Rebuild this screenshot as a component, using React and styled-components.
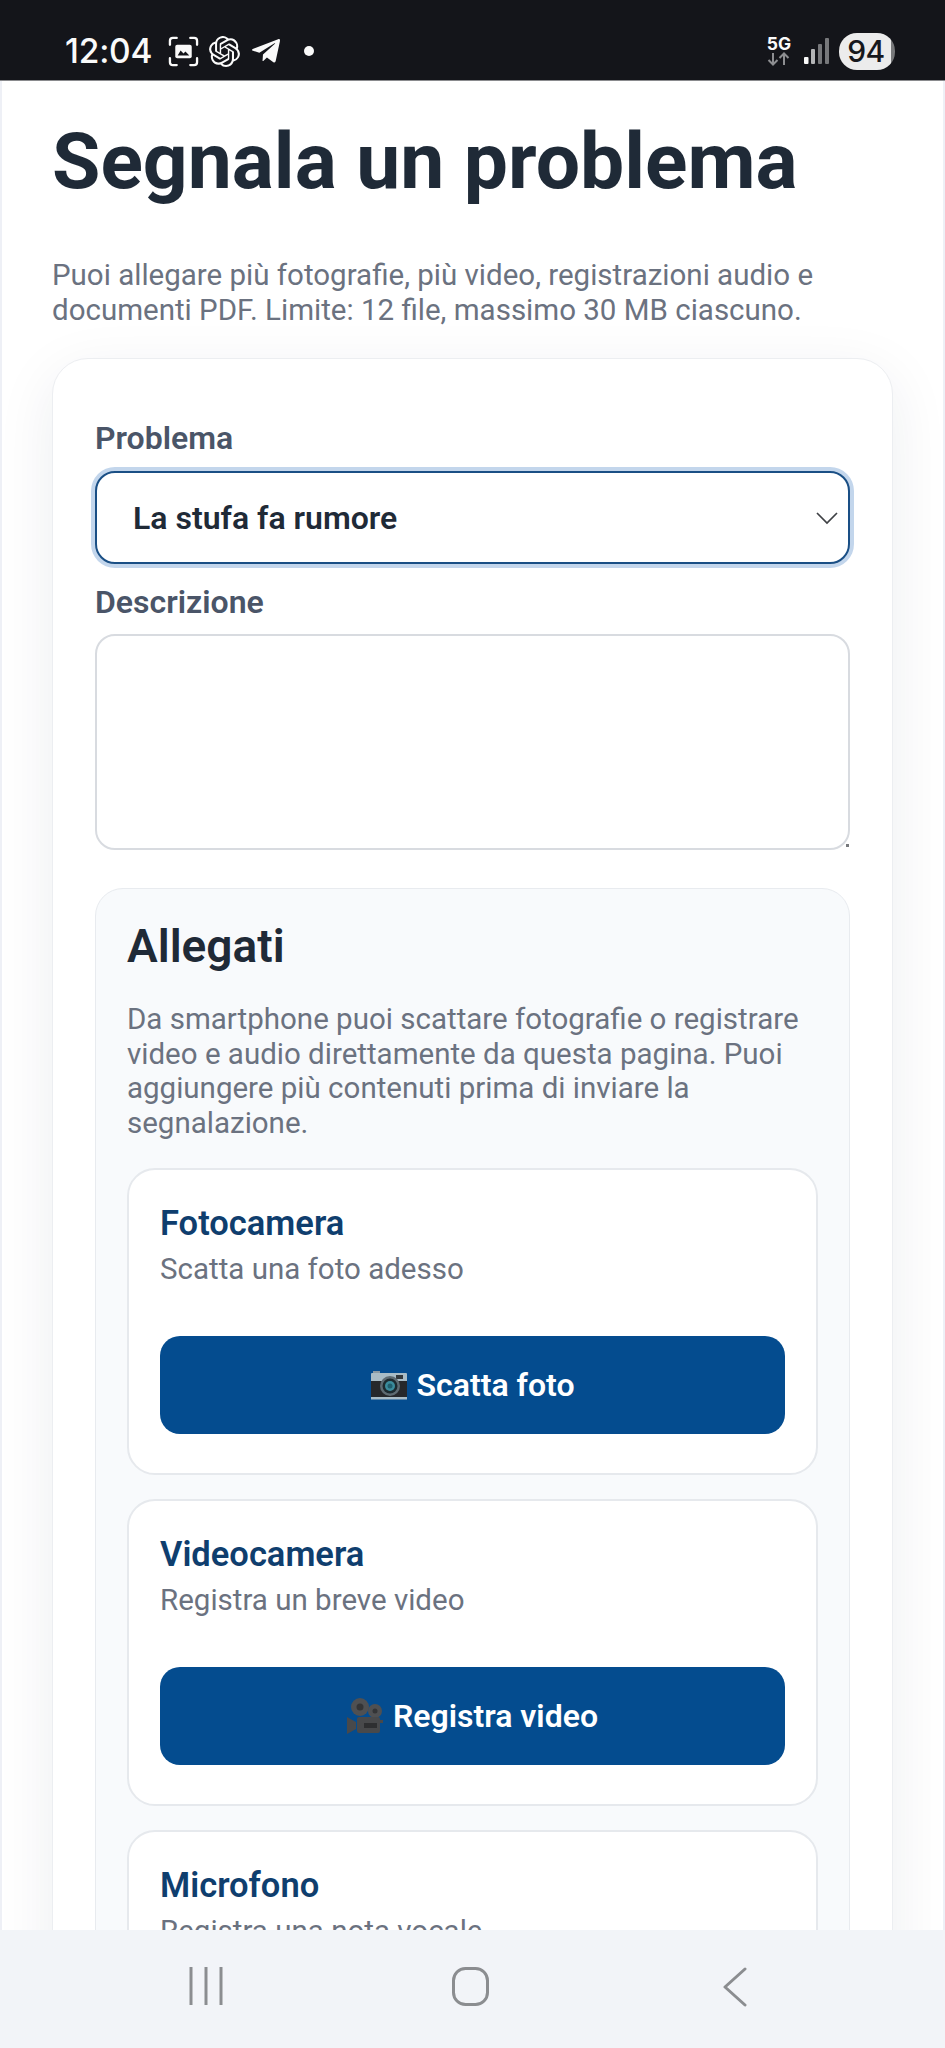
import React from "react";
import styled, { createGlobalStyle } from "styled-components";
import { SiOpenai } from "react-icons/si";
import { FaTelegramPlane } from "react-icons/fa";

const GlobalStyle = createGlobalStyle`
  html, body {
    margin: 0;
    padding: 0;
    background: #ffffff;
  }
  * {
    box-sizing: border-box;
  }
`;

const Screen = styled.div`
  width: 945px;
  height: 2048px;
  display: flex;
  flex-direction: column;
  overflow: hidden;
  font-family: Roboto, "Liberation Sans", sans-serif;
`;

const StatusBar = styled.div`
  height: 81px;
  flex: none;
  background: #14151a;
  border-bottom: 1px solid #8a8b8e;
  display: flex;
  align-items: center;
  justify-content: space-between;
  padding: 0 50px 0 65px;
  color: #fafafa;
`;

const StatusGroup = styled.div`
  display: flex;
  align-items: center;
  gap: ${(p) => p.$gap || 0}px;
  margin-top: 22px;
`;

const Clock = styled.span`
  font-family: Inter, Roboto, sans-serif;
  font-size: 33.5px;
  font-weight: 500;
  letter-spacing: -0.2px;
  margin-right: 6px;
`;

const Dot = styled.span`
  width: 10px;
  height: 10px;
  border-radius: 50%;
  background: #fafafa;
  margin-left: 12px;
`;

const NetBox = styled.div`
  display: flex;
  flex-direction: column;
  align-items: center;
  width: 26px;
  margin-right: 12px;
`;

const NetLabel = styled.span`
  font-family: Inter, Roboto, sans-serif;
  font-size: 17.5px;
  font-weight: 700;
  line-height: 16px;
`;

const Battery = styled.div`
  width: 56px;
  height: 37px;
  border-radius: 18px;
  margin-left: 10px;
  background: linear-gradient(to right, #ececec 93%, #77787a 93%);
  color: #17181c;
  font-family: Inter, Roboto, sans-serif;
  font-size: 30px;
  font-weight: 500;
  letter-spacing: -0.5px;
  display: flex;
  align-items: center;
  justify-content: center;
  padding-right: 2px;
`;

const Viewport = styled.div`
  flex: 1;
  min-height: 0;
  overflow: hidden;
  background: #ffffff;
  border-left: 2px solid #eef0f6;
  border-right: 2px solid #eef0f6;
  padding: 0 50px;
`;

const Title = styled.h1`
  margin: 0;
  padding-top: 35px;
  font-size: 78.6px;
  line-height: 90px;
  font-weight: 700;
  color: #1f2a37;
`;

const Intro = styled.p`
  margin: 0;
  padding-top: 52px;
  font-size: 29.5px;
  line-height: 34.5px;
  color: #6b7280;
`;

const MainCard = styled.section`
  margin-top: 31px;
  background: #ffffff;
  border: 1px solid #eceef1;
  border-radius: 36px;
  padding: 61px 42px 0;
  box-shadow: 0 16px 60px rgba(20, 40, 60, 0.08);
`;

const Label = styled.label`
  display: block;
  font-size: 32px;
  line-height: 36px;
  font-weight: 600;
  color: #4a5568;
`;

const SelectBox = styled.div`
  margin-top: 15px;
  height: 93px;
  background: #ffffff;
  border: 2.5px solid #1a4f85;
  border-radius: 20px;
  box-shadow: 0 0 0 4px #c3d6ec;
  display: flex;
  align-items: center;
  justify-content: space-between;
  padding: 0 10px 0 36px;
  font-size: 32px;
  font-weight: 600;
  color: #1f2a37;
  margin-bottom: 20px;
`;

const TextArea = styled.div`
  position: relative;
  margin-top: 14px;
  height: 216px;
  background: #ffffff;
  border: 2px solid #d8dbe0;
  border-radius: 20px;

  &::after {
    content: "";
    position: absolute;
    right: -1px;
    bottom: 1px;
    width: 3px;
    height: 3px;
    background: #77797d;
  }
`;

const Panel = styled.div`
  margin-top: 38px;
  background: #f8fafc;
  border: 1.5px solid #e8ebef;
  border-radius: 28px;
  padding: 31px 31px 0;
`;

const PanelTitle = styled.h2`
  margin: 0;
  font-size: 46px;
  line-height: 52px;
  font-weight: 600;
  color: #1f2a37;
`;

const PanelText = styled.p`
  margin: 0;
  padding-top: 30px;
  font-size: 29.5px;
  line-height: 34.5px;
  color: #6b7280;
`;

const ToolCard = styled.div`
  margin-top: ${(p) => (p.$first ? 28 : 24)}px;
  height: 307px;
  background: #ffffff;
  border: 2px solid #e6e9ed;
  border-radius: 28px;
  padding: 33px 31px 0;
`;

const ToolName = styled.h3`
  margin: 0;
  font-size: 34.5px;
  line-height: 40px;
  font-weight: 600;
  color: #0f3e6e;
`;

const ToolHint = styled.p`
  margin: 0;
  padding-top: 6px;
  font-size: 29.5px;
  line-height: 40px;
  color: #6b7280;
`;

const ActionButton = styled.button`
  display: flex;
  align-items: center;
  justify-content: center;
  gap: 10px;
  width: 100%;
  height: 98px;
  margin-top: 47px;
  border: none;
  border-radius: 20px;
  background: #044c8f;
  color: #ffffff;
  font-family: inherit;
  font-size: 32px;
  font-weight: 600;
`;

const NavBar = styled.div`
  height: 118px;
  flex: none;
  background: #f2f4f8;
  display: grid;
  grid-template-columns: repeat(3, 264.5px);
  justify-content: center;
  align-items: start;
  padding: 37px 4px 0 0;
  position: relative;
`;

const NavSlot = styled.div`
  display: flex;
  justify-content: center;
`;

const ScreenshotIcon = () => (
  <svg width="31" height="31" viewBox="0 0 32 32" fill="none" stroke="#fafafa" strokeWidth="2.4" strokeLinecap="round">
    <path d="M2 9V5a3 3 0 0 1 3-3h4M23 2h4a3 3 0 0 1 3 3v4M30 23v4a3 3 0 0 1-3 3h-4M9 30H5a3 3 0 0 1-3-3v-4" />
    <rect x="7.5" y="9" width="17" height="14" rx="2" fill="#fafafa" stroke="none" />
    <path d="M10 20l3-5 3 3 2-2 4 4z" fill="#14151a" stroke="none" />
  </svg>
);

const ArrowsIcon = () => (
  <svg width="24" height="14" viewBox="0 0 24 14" fill="none" stroke="#8d8e91" strokeWidth="2">
    <path d="M6 1v11M1.5 8l4.5 4.5L10.500 8M17 13V2M12.500 6L17 1.500 21.500 6" />
  </svg>
);

const SignalIcon = () => (
  <svg width="25" height="26" viewBox="0 0 25 26">
    <rect x="0" y="19" width="4.500" height="7" rx="1" fill="#fafafa" />
    <rect x="7" y="11" width="4" height="15" rx="1" fill="#b4b5b7" />
    <rect x="14" y="6" width="4" height="20" rx="1" fill="#77787b" />
    <rect x="21" y="0" width="4" height="26" rx="1" fill="#77787b" />
  </svg>
);

const ChevronIcon = () => (
  <svg width="22" height="14" viewBox="0 0 22 14" fill="none" stroke="#3f4145" strokeWidth="1.7">
    <path d="M1 2l10 10L21 2" />
  </svg>
);

const CameraEmoji = () => (
  <svg width="36" height="30" viewBox="0 0 36 30">
    <rect x="2" y="1" width="7" height="4" fill="#8b9aa3" />
    <rect x="0" y="3" width="36" height="9" rx="1" fill="#a9bcc6" />
    <rect x="0" y="11" width="36" height="17" fill="#26282b" />
    <rect x="0" y="27" width="36" height="2.500" fill="#a9bcc6" />
    <rect x="25" y="5" width="7" height="4" fill="#33383c" />
    <circle cx="19" cy="16" r="10" fill="#5e6b72" />
    <circle cx="19" cy="16" r="7.500" fill="#1d2b30" />
    <circle cx="19" cy="16" r="5" fill="#3b8c9c" />
    <circle cx="19" cy="16" r="2.500" fill="#1f5f6e" />
  </svg>
);

const VideoEmoji = () => (
  <svg width="36" height="38" viewBox="0 0 36 38">
    <circle cx="13" cy="10" r="9" fill="#4f5052" />
    <circle cx="13" cy="10" r="3.500" fill="#333436" />
    <circle cx="28" cy="14" r="7" fill="#4f5052" />
    <circle cx="28" cy="14" r="2.500" fill="#333436" />
    <rect x="10" y="20" width="23" height="16" rx="2" fill="#48494b" />
    <rect x="17" y="26" width="13" height="5" fill="#2e2f31" />
    <path d="M0 20l9 5v7l-9 5z" fill="#48494b" />
    <rect x="31" y="23" width="5" height="3" fill="#48494b" />
  </svg>
);

const RecentsIcon = () => (
  <svg width="34" height="38" viewBox="0 0 34 38" stroke="#8b8d90" strokeWidth="3">
    <path d="M2 0v38M17 0v38M32 0v38" />
  </svg>
);

const HomeIcon = () => (
  <svg width="37" height="39" viewBox="0 0 37 39" fill="none" stroke="#8b8d90" strokeWidth="3">
    <rect x="1.500" y="1.500" width="34" height="36" rx="12" />
  </svg>
);

const BackIcon = () => (
  <svg width="24" height="40" viewBox="0 0 24 40" fill="none" stroke="#8b8d90" strokeWidth="3" strokeLinecap="round" strokeLinejoin="round">
    <path d="M22 2L2 20l20 18" />
  </svg>
);

const tools = [
  { name: "Fotocamera", hint: "Scatta una foto adesso", action: "Scatta foto", icon: <CameraEmoji /> },
  { name: "Videocamera", hint: "Registra un breve video", action: "Registra video", icon: <VideoEmoji /> },
  { name: "Microfono", hint: "Registra una nota vocale" },
];

export default function App() {
  return (
    <Screen>
      <GlobalStyle />
      <StatusBar>
        <StatusGroup $gap={10}>
          <Clock>12:04</Clock>
          <ScreenshotIcon />
          <SiOpenai size={31} color="#fafafa" />
          <FaTelegramPlane size={32} color="#fafafa" />
          <Dot />
        </StatusGroup>
        <StatusGroup>
          <NetBox>
            <NetLabel>5G</NetLabel>
            <ArrowsIcon />
          </NetBox>
          <SignalIcon />
          <Battery>94</Battery>
        </StatusGroup>
      </StatusBar>

      <Viewport>
        <Title>Segnala un problema</Title>
        <Intro>
          Puoi allegare più fotografie, più video, registrazioni audio e documenti PDF. Limite: 12 file, massimo 30 MB ciascuno.
        </Intro>
        <MainCard>
          <Label>Problema</Label>
          <SelectBox>
            La stufa fa rumore
            <ChevronIcon />
          </SelectBox>
          <Label>Descrizione</Label>
          <TextArea />
          <Panel>
            <PanelTitle>Allegati</PanelTitle>
            <PanelText>
              Da smartphone puoi scattare fotografie o registrare video e audio direttamente da questa pagina. Puoi aggiungere più contenuti prima di inviare la segnalazione.
            </PanelText>
            {tools.map((tool, index) => (
              <ToolCard key={tool.name} $first={index === 0}>
                <ToolName>{tool.name}</ToolName>
                <ToolHint>{tool.hint}</ToolHint>
                {tool.action && (
                  <ActionButton>
                    {tool.icon}
                    {tool.action}
                  </ActionButton>
                )}
              </ToolCard>
            ))}
          </Panel>
        </MainCard>
      </Viewport>

      <NavBar>
        <NavSlot>
          <RecentsIcon />
        </NavSlot>
        <NavSlot>
          <HomeIcon />
        </NavSlot>
        <NavSlot>
          <BackIcon />
        </NavSlot>
      </NavBar>
    </Screen>
  );
}
